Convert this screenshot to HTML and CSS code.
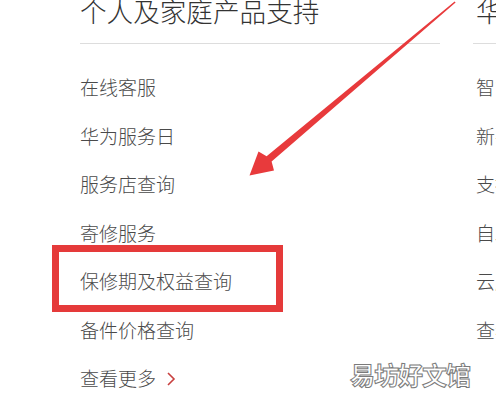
FILE: index.html
```html
<!DOCTYPE html>
<html lang="zh-CN">
<head>
<meta charset="utf-8">
<title>个人及家庭产品支持</title>
<link rel="stylesheet" href="styles.css">
</head>
<body>
<div class="page">
  <section class="col col-main">
    <h2 class="col-title">个人及家庭产品支持</h2>
    <ul class="links">
      <li>在线客服</li>
      <li>华为服务日</li>
      <li>服务店查询</li>
      <li>寄修服务</li>
      <li>保修期及权益查询</li>
      <li>备件价格查询</li>
      <li class="more">查看更多<svg class="chev" width="10" height="16" viewBox="0 0 10 16"><path d="M2 2 L8 8 L2 14" fill="none" stroke="#c8403f" stroke-width="1.6"/></svg></li>
    </ul>
  </section>
  <section class="col col-side">
    <h2 class="col-title">华为企业业务支持</h2>
    <ul class="links">
      <li>智能服务</li>
      <li>新手指南</li>
      <li>支持中心</li>
      <li>自助服务</li>
      <li>云服务</li>
      <li>查看更多</li>
    </ul>
  </section>
</div>
<svg class="overlay" width="496" height="406" viewBox="0 0 496 406">
  <rect x="55.5" y="248.5" width="224" height="60" fill="none" stroke="#e53a3a" stroke-width="7"/>
  <polygon points="454.6,1.4 455.6,2.6 271.6,161.6 274,170.5 249.5,175.5 258.5,151.5 266.6,156.2" fill="#e83a3c"/>
</svg>
<div class="watermark">易坊好文馆</div>
</body>
</html>
```
FILE: styles.css
```css
html, body {
  margin: 0;
  padding: 0;
}
body {
  width: 496px;
  height: 406px;
  overflow: hidden;
  position: relative;
  background: #ffffff;
  font-family: "Noto Sans CJK SC", "Noto Sans", sans-serif;
}
.page {
  display: flex;
  gap: 33px;
  padding-left: 80px;
  margin-top: -3px;
}
.col {
  flex: none;
}
.col-main {
  width: 360px;
}
.col-side {
  width: 200px;
}
.col-title {
  margin: 0;
  font-size: 26.6px;
  font-weight: 300;
  line-height: 28px;
  color: #333333;
  padding-bottom: 18px;
  border-bottom: 1px solid #dddddd;
  white-space: nowrap;
}
.col-side .col-title,
.col-side .links li {
  padding-left: 3px;
}
.links {
  list-style: none;
  margin: 19px 0 0;
  padding: 0;
}
.links li {
  font-size: 19px;
  font-weight: 300;
  line-height: 48.5px;
  height: 48.5px;
  color: #4a4a4a;
  white-space: nowrap;
}
.more {
  display: flex;
  align-items: center;
}
.chev {
  margin-left: 10px;
  margin-top: 2px;
}
.overlay {
  position: absolute;
  left: 0;
  top: 0;
}
.watermark {
  position: absolute;
  left: 350px;
  top: 356px;
  font-size: 25px;
  font-weight: bold;
  line-height: 36px;
  color: #ffffff;
  -webkit-text-stroke: 1px #7a7a7a;
  letter-spacing: -1px;
  white-space: nowrap;
}
```
